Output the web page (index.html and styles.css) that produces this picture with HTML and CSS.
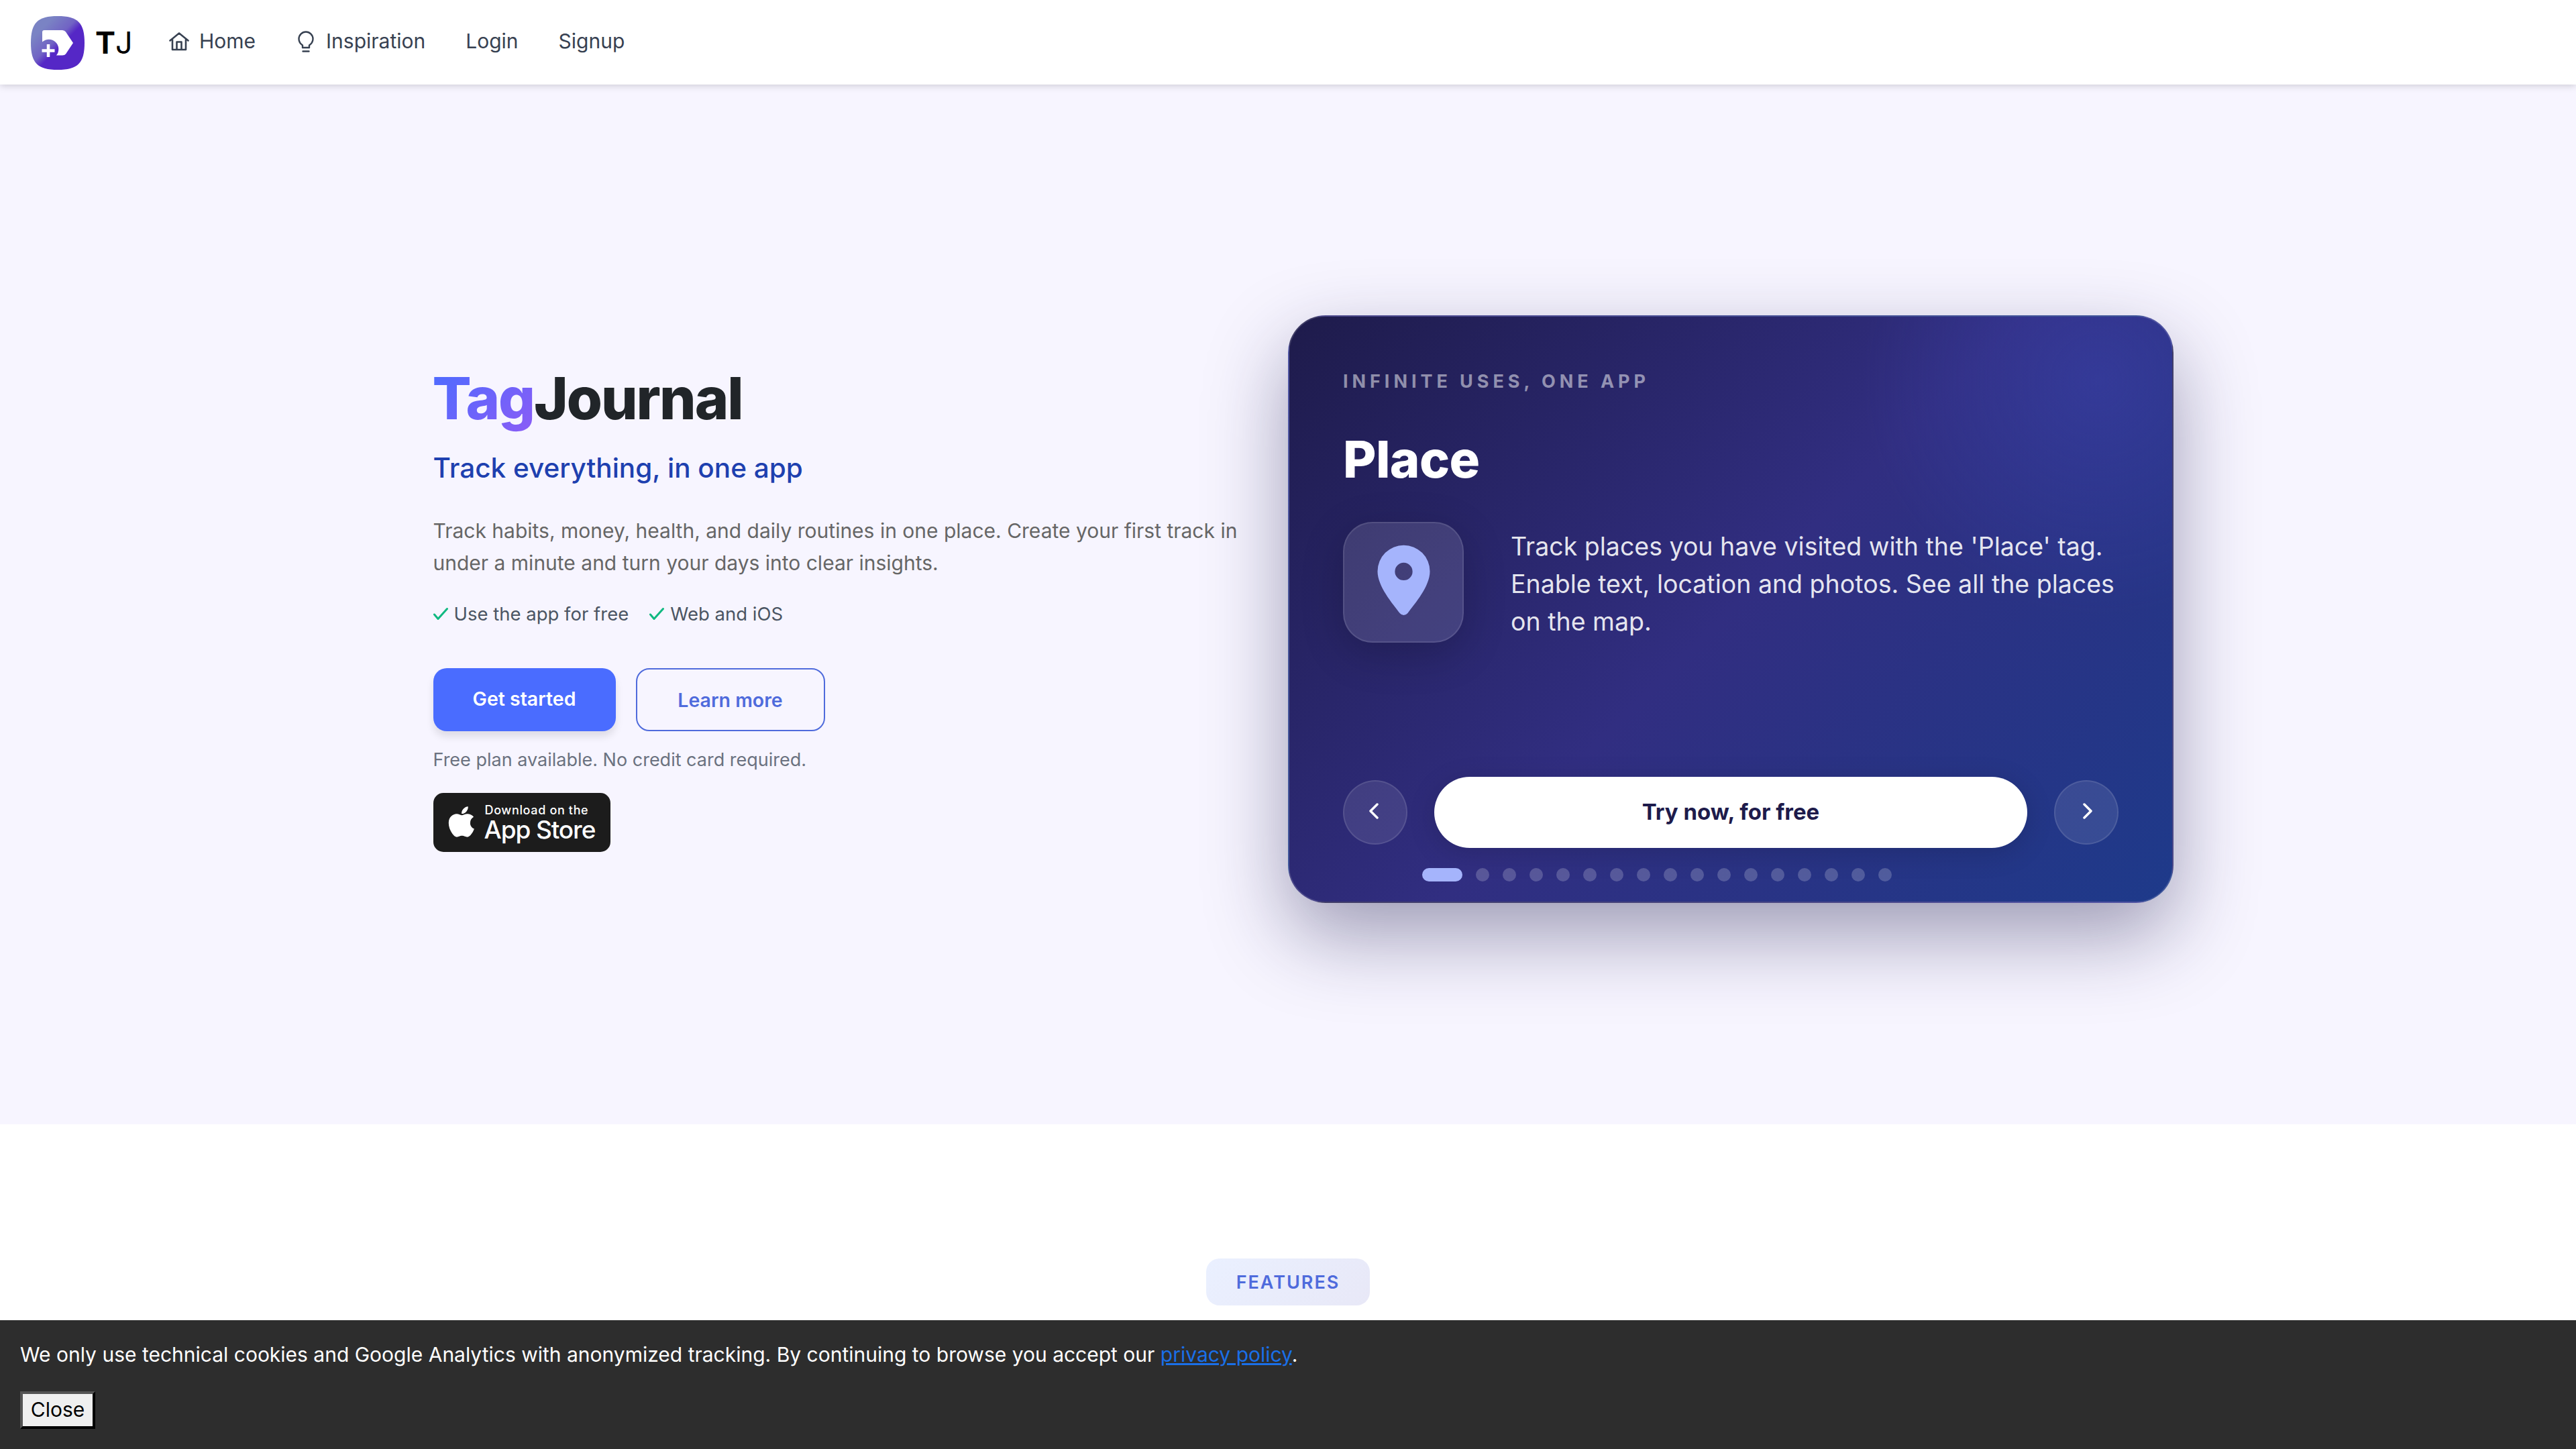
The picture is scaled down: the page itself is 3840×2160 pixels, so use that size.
FILE: index.html
```html
<!DOCTYPE html>
<html lang="en">
<head>
<meta charset="utf-8">
<title>TagJournal</title>
<link rel="stylesheet" href="styles.css">
</head>
<body>
<header class="navbar">
  <a class="brand">
    <svg class="brand-logo" viewBox="0 0 80 80">
      <defs>
        <linearGradient id="lg" x1="0.22" y1="0.22" x2="0.8" y2="0.8">
          <stop offset="0" stop-color="#7a83c4"/><stop offset="0.4" stop-color="#7163c4"/><stop offset="0.58" stop-color="#5527c6"/><stop offset="1" stop-color="#5527c6"/>
        </linearGradient>
      </defs>
      <path d="M40 0C70 0 80 10 80 40S70 80 40 80S0 70 0 40S10 0 40 0Z" fill="url(#lg)"/>
      <path d="M20 21H47Q50 21 52 23.500L63 40L52 56.500Q50.500 58.500 47 58.500H38A14.500 14.500 0 0 0 17 38.600V24Q17 21 20 21Z" fill="#fff"/>
      <path d="M26 42V61M16.500 51.500H35.500" stroke="#fff" stroke-width="4.500"/>
    </svg>
    <span class="brand-name"><b>T</b>J</span>
  </a>
  <nav class="nav-links">
    <a class="nav-link"><svg class="nav-icon home" viewBox="0 0 30 28" fill="none" stroke="currentColor" stroke-width="2.600" stroke-linejoin="round" stroke-linecap="round"><path d="M1.500 12.500L15 1.500L28.500 12.500M5 10V26H25V10M11.500 26V14.500H18.500V26"/></svg>Home</a>
    <a class="nav-link"><svg class="nav-icon bulb" viewBox="0 0 24 32" fill="none" stroke="currentColor" stroke-width="2.400" stroke-linecap="round"><path d="M7 25V21.500C3.500 19 1.500 15.500 1.500 12A10.500 10.500 0 0 1 22.500 12C22.500 15.500 20.500 19 17 21.500V25ZM7.500 30.500H16.500" stroke-linejoin="round"/></svg>Inspiration</a>
    <a class="nav-link">Login</a>
    <a class="nav-link">Signup</a>
  </nav>
</header>
<main>
  <section class="hero">
    <div class="hero-inner">
      <div class="intro">
        <h1 class="title"><span class="title-accent">Tag</span>Journal</h1>
        <p class="tagline">Track everything, in one app</p>
        <p class="lead">Track habits, money, health, and daily routines in one place. Create your first track in<br>under a minute and turn your days into clear insights.</p>
        <ul class="perks">
          <li class="perk"><svg class="check" viewBox="0 0 22 20"><path d="M1.500 11L7 17.500L20.500 2.500"/></svg>Use the app for free</li>
          <li class="perk"><svg class="check" viewBox="0 0 22 20"><path d="M1.500 11L7 17.500L20.500 2.500"/></svg>Web and iOS</li>
        </ul>
        <div class="actions">
          <a class="btn btn-primary">Get started</a>
          <a class="btn btn-outline">Learn more</a>
        </div>
        <p class="note">Free plan available. No credit card required.</p>
        <a class="store">
          <svg class="apple" viewBox="0 0 384 470"><path d="M319 249c0-37 16-64 50-84-19-27-47-42-84-45-35-3-74 20-88 20-15 0-49-19-76-19C65 122 4 165 4 253c0 26 5 53 14 80 13 36 58 125 106 124 25-1 42-18 75-18 31 0 48 18 76 18 48-1 90-82 102-118-65-31-58-88-58-90zM263 85c27-32 25-62 24-73-24 1-52 16-68 35-17 20-28 44-26 71 26 2 50-11 70-33z"/></svg>
          <span class="store-text"><small>Download on the</small><strong>App Store</strong></span>
        </a>
      </div>
      <article class="card">
        <p class="eyebrow">INFINITE USES, ONE APP</p>
        <h2 class="card-title">Place</h2>
        <div class="card-body">
          <div class="tile"><svg class="pin" viewBox="0 0 80 106"><path fill-rule="evenodd" d="M40 0A39.500 39.500 0 0 1 79.500 39.500C79.500 62 57 88 46 102.500Q40 109 34 102.500C23 88 .5 62 .5 39.500A39.500 39.500 0 0 1 40 0ZM40 26.500A13.300 13.300 0 1 0 40 53.100A13.300 13.300 0 1 0 40 26.500Z"/></svg></div>
          <p class="card-text">Track places you have visited with the 'Place' tag.<br>Enable text, location and photos. See all the places<br>on the map.</p>
        </div>
        <div class="controls">
          <button class="arrow"><svg class="chev" viewBox="0 0 14 24"><path d="M12 2L2 12L12 22"/></svg></button>
          <a class="try">Try now, for free</a>
          <button class="arrow arrow-next"><svg class="chev" viewBox="0 0 14 24"><path d="M2 2L12 12L2 22"/></svg></button>
        </div>
        <div class="dots"><i class="dot active"></i><i class="dot"></i><i class="dot"></i><i class="dot"></i><i class="dot"></i><i class="dot"></i><i class="dot"></i><i class="dot"></i><i class="dot"></i><i class="dot"></i><i class="dot"></i><i class="dot"></i><i class="dot"></i><i class="dot"></i><i class="dot"></i><i class="dot"></i><i class="dot"></i></div>
      </article>
    </div>
  </section>
  <section class="features"><span class="badge">FEATURES</span></section>
</main>
<aside class="cookies">
  <p class="cookies-text">We only use technical cookies and Google Analytics with anonymized tracking. By continuing to browse you accept our <a class="policy">privacy policy</a>.</p>
  <button class="close">Close</button>
</aside>
</body>
</html>
```
FILE: styles.css
```css
* { box-sizing: border-box; }
body { margin: 0; height: 2160px; overflow: hidden; display: flex; flex-direction: column; font-family: Inter, sans-serif; font-size: 30px; color: #212529; background: #fff; }
p, h1, h2, ul { margin: 0; padding: 0; }
main { flex: 1; min-height: 0; overflow: hidden; }
.navbar { height: 126px; flex: none; display: flex; align-items: center; padding-left: 46px; background: #fff; box-shadow: 0 2px 10px rgba(0,0,0,.17); position: relative; z-index: 1; }
.brand { display: flex; align-items: center; gap: 16px; width: 206px; padding-top: 2px; }
.brand-logo { width: 80px; height: 80px; }
.brand-name { font-size: 45px; line-height: 54px; color: #000; font-weight: 400; }
.brand-name b { font-weight: 700; }
.nav-links { display: flex; gap: 60px; color: #374151; line-height: 44px; padding-bottom: 4px; }
.nav-link { display: flex; align-items: center; }
.home { width: 30px; height: 28px; margin: 2px 15px 0 0; }
.bulb { width: 24px; height: 32px; margin: 2px 18px 0 3px; }
.hero { height: 1550px; background: #f7f5ff; }
.hero-inner { padding: 344px 600px 0 645.500px; display: flex; justify-content: space-between; }
.intro { width: 1230px; padding-top: 69px; }
.title { margin-left: -1px; font-size: 86px; font-weight: 800; line-height: 110px; letter-spacing: -2px; }
.title-accent { background: linear-gradient(135deg, #4a6cff, #8b5cf6); -webkit-background-clip: text; background-clip: text; color: transparent; }
.tagline { margin-top: 19px; font-size: 40.500px; line-height: 60px; font-weight: 500; color: #1e40af; }
.lead { margin-top: 39px; line-height: 48px; color: #666; white-space: nowrap; }
.perks { display: flex; gap: 31px; margin-top: 32px; list-style: none; font-size: 27.500px; line-height: 40px; color: #4b5563; }
.perk { display: flex; align-items: center; }
.check { width: 22px; height: 20px; margin-right: 9px; fill: none; stroke: #10b981; stroke-width: 3; stroke-linecap: round; stroke-linejoin: round; }
.actions { display: flex; gap: 30px; margin-top: 61px; }
.btn { height: 94px; display: flex; align-items: center; justify-content: center; border-radius: 20px; font-size: 28.500px; font-weight: 600; }
.btn-primary { width: 272px; background: #4a6cff; color: #fff; padding-bottom: 3px; box-shadow: 0 8px 12px rgba(0,0,0,.1); }
.btn-outline { width: 282px; border: 2px solid #4f6bdc; color: #4f6bdc; }
.note { margin-top: 23px; font-size: 27px; line-height: 40px; color: #6b7280; }
.store { margin-top: 29px; width: 264px; height: 88px; border-radius: 15px; background: #1c1c1c; color: #fff; display: flex; padding: 19px 0 0 22px; }
.apple { width: 40px; height: 48px; fill: #fff; }
.store-text { margin: -5px 0 0 14px; display: flex; flex-direction: column; white-space: nowrap; }
.store-text small { font-size: 18px; line-height: 24px; margin-left: 1px; font-weight: 500; letter-spacing: .65px; }
.store-text strong { font-size: 37px; line-height: 34px; font-weight: 500; letter-spacing: -1.100px; }
.card { width: 1320px; height: 876px; border: 2px solid rgba(255,255,255,.15); border-radius: 56px; padding: 79px 80px 80px; color: #fff; background: radial-gradient(circle 350px at 1205px 95px, rgba(64,75,190,.36), rgba(64,75,190,0)), linear-gradient(135deg, #1e1b4b 0%, #312e81 50%, #1e3a8a 100%); box-shadow: 0 48px 120px rgba(30,27,75,.41); }
.eyebrow { font-size: 27px; line-height: 36px; font-weight: 700; letter-spacing: 5.950px; color: rgba(255,255,255,.5); }
.card-title { margin-top: 51px; font-size: 76px; line-height: 92px; font-weight: 800; letter-spacing: -.6px; }
.card-body { display: flex; align-items: center; gap: 70px; margin-top: 48px; }
.tile { width: 180px; height: 180px; border: 2px solid rgba(255,255,255,.1); border-radius: 44px; background: rgba(255,255,255,.12); display: flex; align-items: center; justify-content: center; padding-bottom: 7px; box-shadow: 0 16px 64px rgba(0,0,0,.2); }
.pin { width: 79px; height: 106px; fill: #a5b4fc; }
.card-text { padding-top: 5px; font-size: 37.500px; line-height: 56px; color: rgba(255,255,255,.9); white-space: nowrap; }
.controls { display: flex; align-items: center; gap: 40px; margin-top: 200px; }
.arrow { width: 96px; height: 96px; flex: none; padding: 0 4px 4px 0; border: 2px solid rgba(255,255,255,.1); border-radius: 50%; background: rgba(255,255,255,.1); display: flex; align-items: center; justify-content: center; }
.arrow-next { padding: 0 0 4px 3px; }
.chev { width: 14px; height: 24px; fill: none; stroke: #fff; stroke-width: 3.500; stroke-linecap: round; stroke-linejoin: round; }
.try { flex: 1; height: 106px; border-radius: 53px; background: #fff; color: #1e1b4b; font-size: 33px; font-weight: 700; display: flex; align-items: center; justify-content: center; padding-bottom: 2px; box-shadow: 0 8px 40px rgba(0,0,0,.15); }
.dots { display: flex; gap: 20px; margin: 30px 0 0 118px; }
.dot { width: 20px; height: 20px; border-radius: 10px; background: rgba(255,255,255,.2); }
.active { width: 60px; background: #a5b4fc; }
.features { display: flex; justify-content: center; padding-top: 200px; }
.badge { width: 244px; height: 70px; border-radius: 20px; background: linear-gradient(135deg, #eaf0ff, #e8e8f7); color: #4f6bdc; font-size: 27px; font-weight: 600; letter-spacing: 2px; line-height: 72px; text-align: center; }
.cookies { height: 192px; flex: none; padding: 29px 30px; background: #2d2d2d; color: #fff; }
.cookies-text { line-height: 44px; }
.policy { color: #1a6fe8; text-decoration: underline; }
.close { display: block; margin-top: 33px; width: 112px; height: 56px; padding: 0 0 2px; border: 4px outset #000; border-radius: 0; background: #efefef; color: #000; font: 30px/44px Inter, sans-serif; }
```
